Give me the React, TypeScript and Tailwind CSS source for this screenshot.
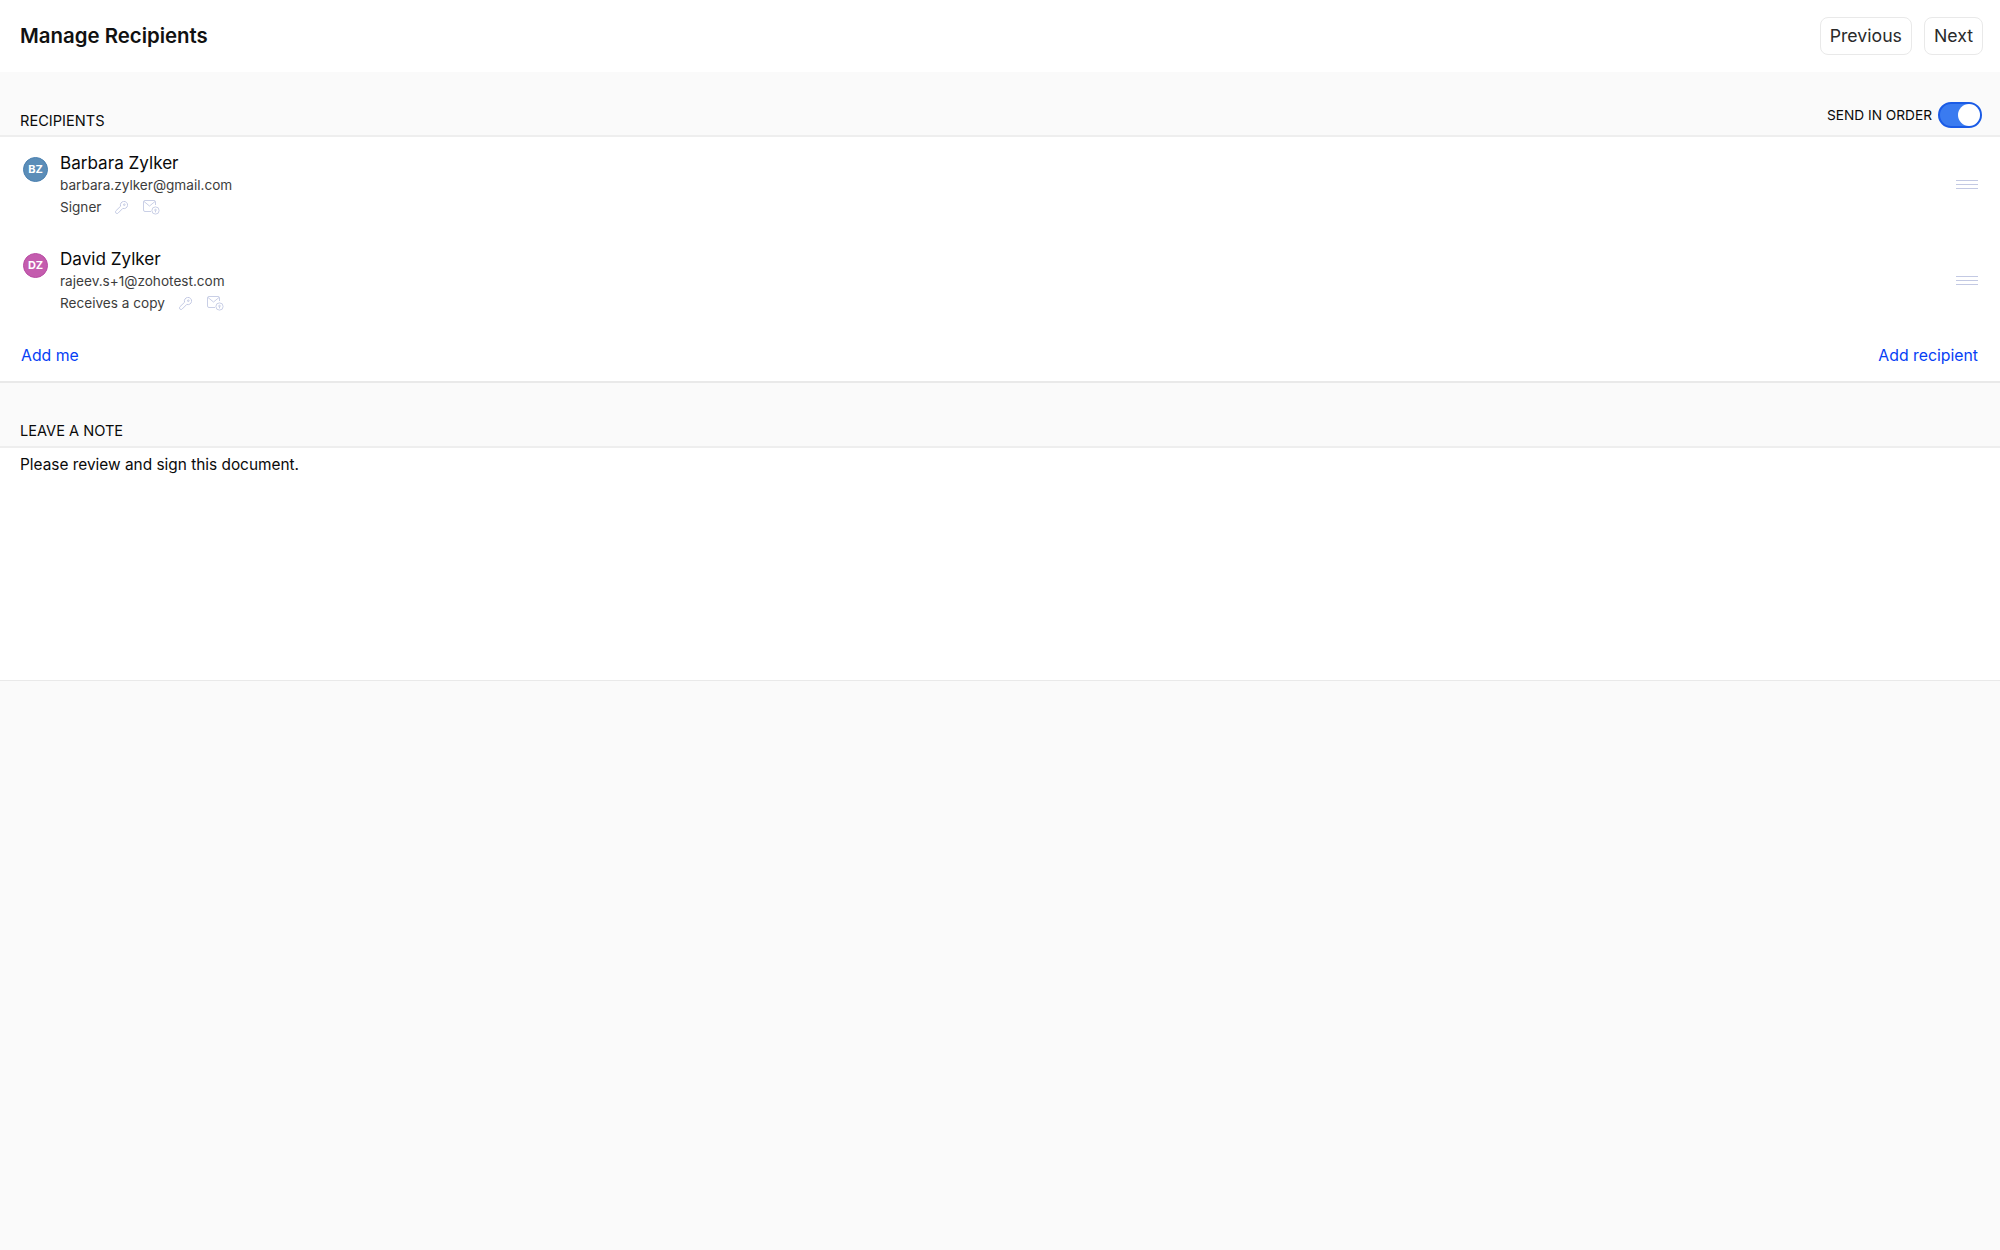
type Recipient = {
  initials: string;
  name: string;
  email: string;
  role: string;
  avatarClass: string;
};

const recipients: Recipient[] = [
  { initials: 'BZ', name: 'Barbara Zylker', email: 'barbara.zylker@gmail.com', role: 'Signer', avatarClass: 'bg-[#5b8db8] border-[#4a80b0]' },
  { initials: 'DZ', name: 'David Zylker', email: 'rajeev.s+1@zohotest.com', role: 'Receives a copy', avatarClass: 'bg-[#c45cae] border-[#b84ba3]' },
];

function KeyIcon() {
  return (
    <svg width="13" height="13" viewBox="0 0 13 13" fill="none" stroke="#c3c9e3" strokeWidth="1" strokeLinejoin="round">
      <path d="M5.6 5.2a3.6 3.6 0 1 1 2.2 2.2L3 12.2c-.3.3-.7.3-1 .2l-.9-.2c-.3-.1-.5-.3-.5-.6l-.1-1c0-.3.1-.5.3-.7z" />
      <circle cx="9.3" cy="3.7" r="0.8" />
    </svg>
  );
}

function MailLockIcon() {
  return (
    <svg width="17" height="15" viewBox="0 0 17 15" fill="none" stroke="#c3c9e3" strokeWidth="0.9">
      <path d="M8 11.5H2a1.5 1.5 0 0 1-1.5-1.5V2A1.5 1.5 0 0 1 2 .5h9A1.5 1.5 0 0 1 12.5 2v3" />
      <path d="M1 1.5l5.5 4.5L12 1.5" />
      <circle cx="12.5" cy="10.5" r="3.6" />
      <circle cx="12.5" cy="10" r="0.8" />
      <path d="M12.5 10.8v1.6" />
    </svg>
  );
}

function SectionHeader({ title, children }: { title: string; children?: React.ReactNode }) {
  return (
    <div className="flex h-[65px] items-end justify-between border-b-2 border-[#eeeeee] bg-[#fafafa] pl-[20px] pr-[18px]">
      <h2 className={`${children ? 'mb-[5px]' : 'mb-[6px]'} text-[14.6px] leading-[18px] text-[#0a0a0a]`}>{title}</h2>
      {children}
    </div>
  );
}

export default function App() {
  return (
    <div className="flex min-h-[1250px] flex-col bg-[#fafafa] font-['Inter',sans-serif]">
      <header className="flex h-[72px] items-center justify-between bg-white pl-[20px] pr-[17px]">
        <h1 className="text-[20.4px] font-semibold text-[#111111]">Manage Recipients</h1>
        <div className="flex items-center gap-[12px]">
          <button className="h-[38px] rounded-[8px] border border-[#e9e9e9] bg-white px-[9px] text-[17.7px] text-[#2a2a2a]">Previous</button>
          <button className="h-[38px] rounded-[8px] border border-[#e9e9e9] bg-white px-[9px] text-[17.7px] text-[#2a2a2a]">Next</button>
        </div>
      </header>

      <SectionHeader title="RECIPIENTS">
        <div className="mb-[7px] flex items-center gap-[6px]">
          <span className="text-[13.7px] text-[#0a0a0a]">SEND IN ORDER</span>
          <div className="flex h-[26px] w-[44px] justify-end rounded-full border-2 border-[#1a5be6] bg-[#3a7bf0]">
            <div className="h-[22px] w-[22px] rounded-full bg-white" />
          </div>
        </div>
      </SectionHeader>

      <section className="bg-white">
        {recipients.map((r) => (
          <div key={r.email} className="flex h-[96px] items-center pl-[23px] pr-[22px]">
            <div className={`mb-[32px] flex h-[25px] w-[25px] shrink-0 items-center justify-center rounded-full border ${r.avatarClass} text-[11px] font-bold text-white`}>
              {r.initials}
            </div>
            <div className="ml-[12px] flex-1">
              <div className="text-[17.1px] leading-[24px] text-[#0a0a0a]">{r.name}</div>
              <div className="text-[13.6px] leading-[21px] text-[#3c3c3c]">{r.email}</div>
              <div className="flex h-[23px] items-center text-[13.6px] text-[#3c3c3c]">
                <span>{r.role}</span>
                <span className="ml-[14px]"><KeyIcon /></span>
                <span className="ml-[15px]"><MailLockIcon /></span>
              </div>
            </div>
            <div className="mb-[2px] flex w-[22px] flex-col gap-[3px]">
              <div className="h-px bg-[#c3c9e3]" />
              <div className="h-px bg-[#c3c9e3]" />
              <div className="h-px bg-[#c3c9e3]" />
            </div>
          </div>
        ))}
        <div className="flex h-[54px] items-start justify-between border-b-2 border-[#e9e9e9] pl-[21px] pr-[22px] pt-[15px] text-[15.8px] text-[#0640f5]">
          <a className="leading-[24px]">Add me</a>
          <a className="leading-[24px]">Add recipient</a>
        </div>
      </section>

      <SectionHeader title="LEAVE A NOTE" />

      <section className="h-[233px] border-b border-[#e9e9e9] bg-white px-[20px] pt-[6px] text-[15.4px] leading-[22px] text-[#0a0a0a]">
        Please review and sign this document.
      </section>
    </div>
  );
}
